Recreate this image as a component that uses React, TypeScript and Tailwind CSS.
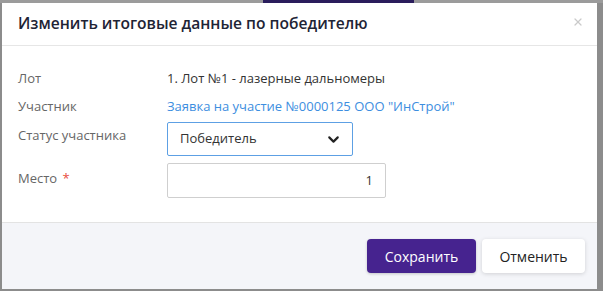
import { X, ChevronDown } from 'lucide-react'

const font = { fontFamily: '"Open Sans", "Noto Sans", sans-serif' }

export default function App() {
  return (
    <div className="w-[603px] h-[291px] bg-[#8c8c8c] flex flex-col overflow-hidden" style={font}>
      {/* background strip of the page behind the modal */}
      <div className="h-[3px] flex shrink-0">
        <div className="w-[263px] bg-[#9b9b9b]" />
        <div className="w-[151px] bg-[#2a1d5c]" />
        <div className="flex-1 bg-[#9b9b9b]" />
      </div>
      <div className="ml-[2px] w-[595px] h-[286px] bg-white flex flex-col">
        {/* Header */}
        <div className="h-[43px] flex items-center justify-between pl-[16px] pr-[13px] border-b border-[#e6e6e6] shrink-0">
          <h2 className="text-[15.6px] font-semibold text-[#1e2435]">Изменить итоговые данные по победителю</h2>
          <X size={12} strokeWidth={2.5} className="text-[#cacaca] -mt-[4px]" />
        </div>

        {/* Body */}
        <div className="flex-1 pl-[16px] pt-[19px] text-[13px] text-[#555]">
          <div className="flex h-[28px] items-center">
            <div className="w-[149px] text-[#666]">Лот</div>
            <div className="text-[#333]">1. Лот №1 - лазерные дальномеры</div>
          </div>
          <div className="flex h-[28px] items-center">
            <div className="w-[149px] text-[#666]">Участник</div>
            <div className="text-[#3d8ee0]">Заявка на участие №0000125 ООО "ИнСтрой"</div>
          </div>
          <div className="flex items-start mt-[1px]">
            <div className="w-[149px] text-[#666] pt-[4px]">Статус участника</div>
            <div className="w-[186px] h-[34px] border border-[#5da0e4] rounded-[2px] flex items-center justify-between pl-[12px] pr-[10px] text-[#333]">
              <span>Победитель</span>
              <ChevronDown size={17} strokeWidth={3} className="text-[#222]" />
            </div>
          </div>
          <div className="flex items-start mt-[7px]">
            <div className="w-[149px] text-[#666] pt-[6px]">
              Место <span className="text-[#e84c3d] ml-[2px]">*</span>
            </div>
            <div className="w-[219px] h-[35px] border border-[#cfcfcf] rounded-[2px] flex items-center justify-end pr-[12px] text-[#333]">
              1
            </div>
          </div>
        </div>

        {/* Footer */}
        <div className="h-[67px] bg-[#f4f5f9] border-t border-[#e3e3e3] flex items-center justify-end gap-[6px] pr-[12px] shrink-0">
          <button className="w-[109px] h-[34px] rounded-[4px] bg-[#46238f] text-white text-[14px] shadow-[0_1px_3px_rgba(0,0,0,0.2)]">
            Сохранить
          </button>
          <button className="w-[103px] h-[34px] rounded-[4px] bg-white text-[#222] text-[14px] shadow-[0_1px_4px_rgba(0,0,0,0.15)]">
            Отменить
          </button>
        </div>
      </div>
    </div>
  )
}
